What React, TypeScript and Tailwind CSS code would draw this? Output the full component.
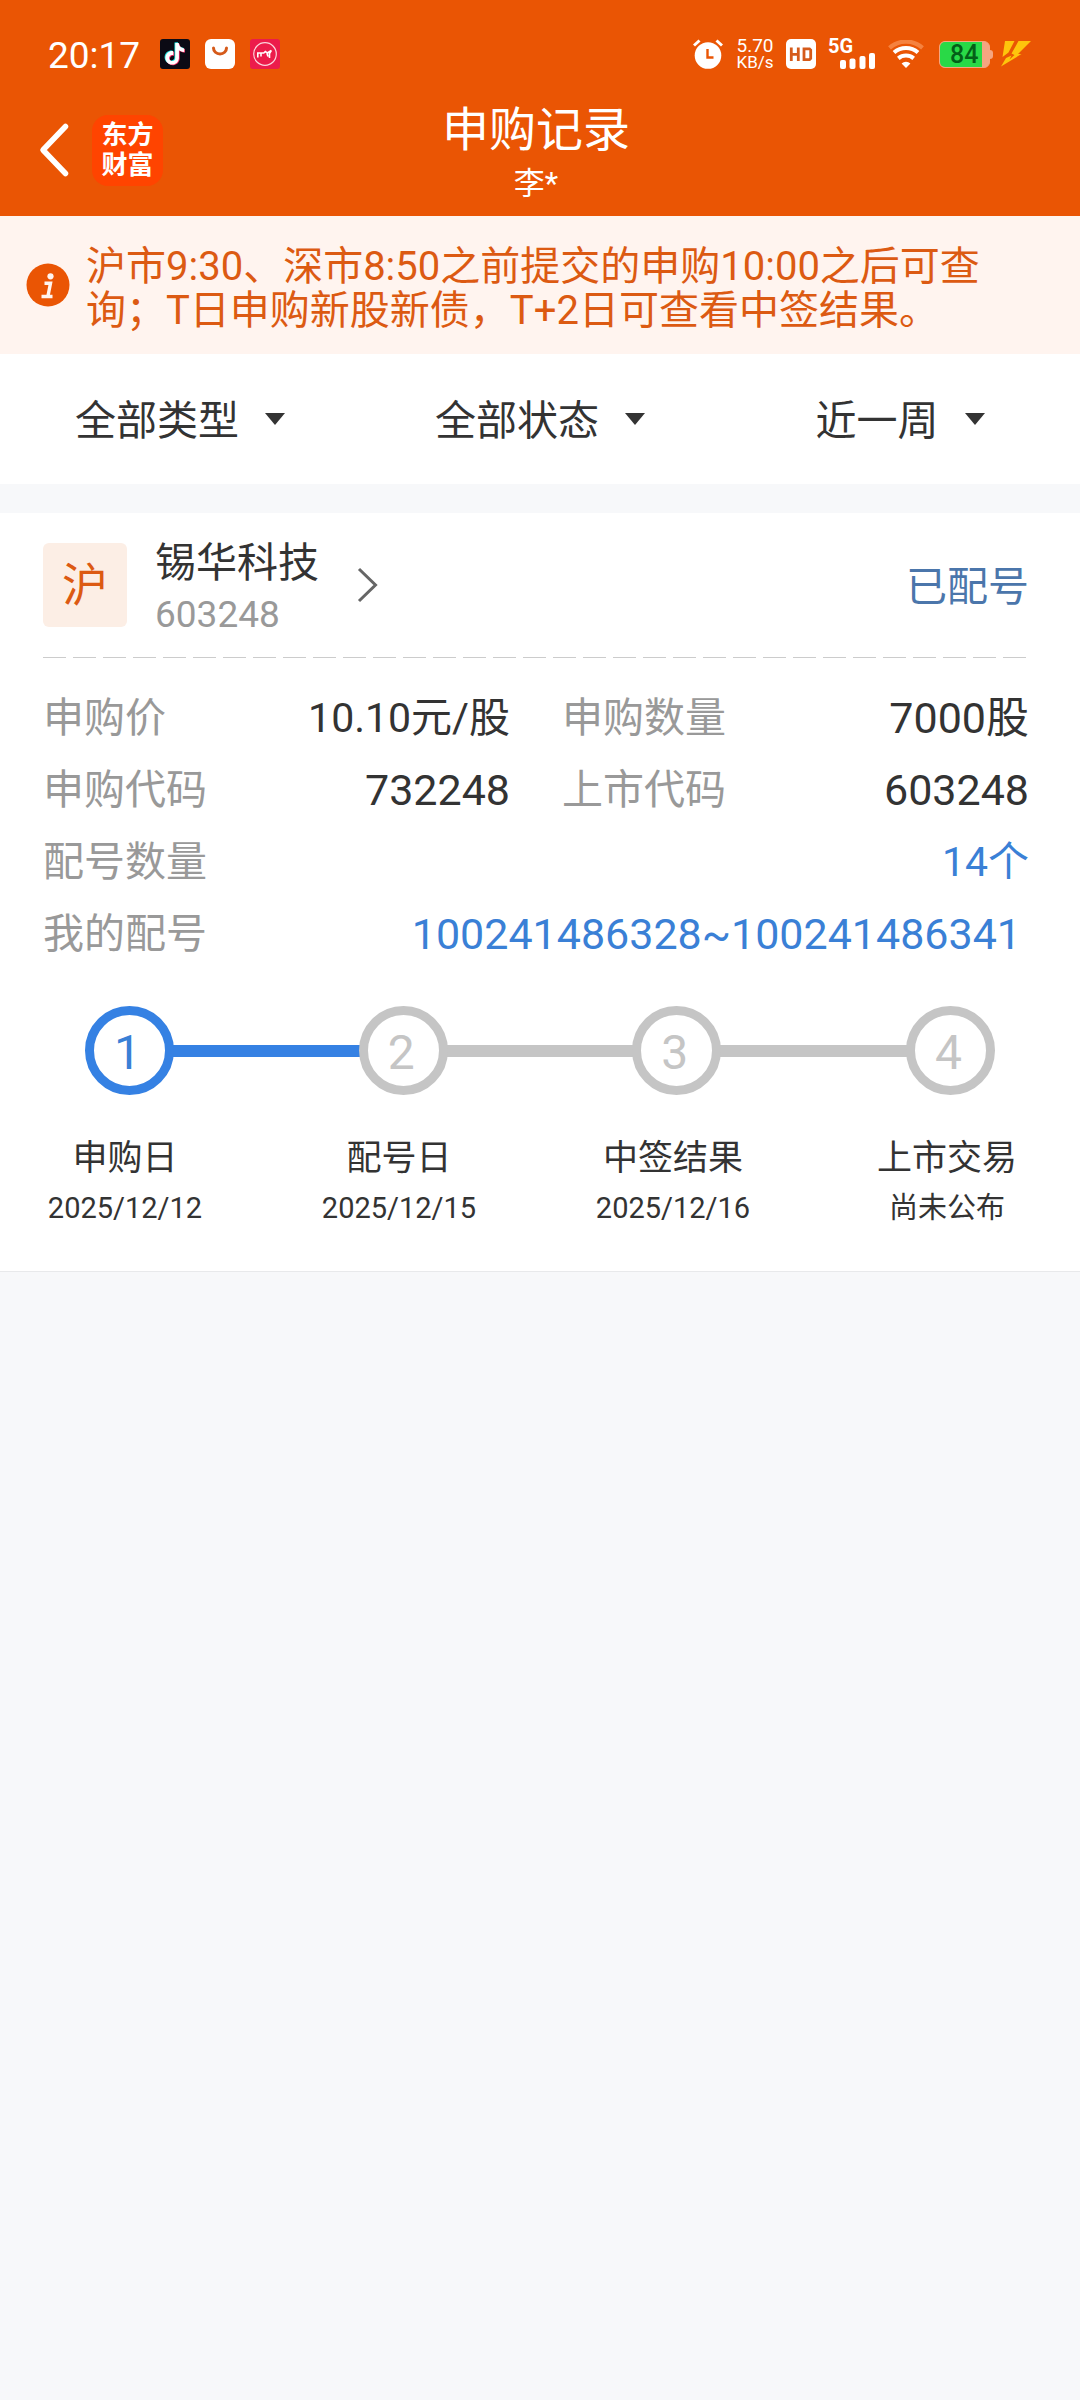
import React from "react";

const NOTE =
  "M12.525.02c1.31-.02 2.61-.01 3.91-.02.08 1.53.63 3.09 1.75 4.17 1.12 1.11 2.7 1.62 4.24 1.79v4.03c-1.44-.05-2.89-.35-4.2-.97-.57-.26-1.1-.59-1.62-.93-.01 2.92.01 5.84-.02 8.75-.08 1.4-.54 2.79-1.35 3.94-1.31 1.92-3.58 3.17-5.91 3.21-1.43.08-2.86-.31-4.08-1.03-2.02-1.19-3.44-3.37-3.65-5.71-.02-.5-.03-1-.01-1.49.18-1.9 1.12-3.72 2.58-4.96 1.66-1.44 3.98-2.13 6.15-1.72.02 1.48-.04 2.96-.04 4.44-.99-.32-2.15-.23-3.02.37-.63.41-1.11 1.04-1.36 1.75-.21.51-.15 1.07-.14 1.61.24 1.64 1.82 3.02 3.5 2.87 1.12-.01 2.19-.66 2.77-1.61.19-.33.4-.67.41-1.06.1-1.79.06-3.57.07-5.36.01-4.03-.01-8.05.02-12.07z";

function StatusBar() {
  return (
    <div className="flex h-[100px] items-center justify-between pt-2 pr-[49px] pl-12">
      <div className="flex items-center">
        <time className="w-28 pt-1 text-[37px] leading-[44px]">20:17</time>
        <div className="flex items-center gap-[15px]">
          <svg width="30" height="30" viewBox="0 0 30 30" aria-hidden="true">
            <rect width="30" height="30" rx="3" fill="#0b0a14" />
            <g transform="translate(4 4) scale(.9)">
              <path d={NOTE} fill="#25e5e0" transform="translate(-.9 -.7)" />
              <path d={NOTE} fill="#f5306a" transform="translate(.9 .7)" />
              <path d={NOTE} fill="#fff" />
            </g>
          </svg>
          <svg width="30" height="30" viewBox="0 0 30 30" aria-hidden="true">
            <rect width="30" height="30" rx="6" fill="#fff" />
            <path d="M8.500 9a6.500 6 0 0 0 13 0" fill="none" stroke="#d55a1a" strokeWidth="3" strokeLinecap="round" />
          </svg>
          <svg width="30" height="30" viewBox="0 0 30 30" aria-hidden="true">
            <rect width="30" height="30" rx="3" fill="#ec1c4b" />
            <circle cx="15" cy="15" r="11.300" fill="none" stroke="#fbd5dd" strokeWidth="1.200" />
            <path d="M7.800 18.500v-4.500h6l1.500-1.500 2 1.500 4-2.500-1.800 3v4.500M11 14v3.500M17 14.500l1 3" fill="none" stroke="#fff" strokeWidth="1.600" />
          </svg>
        </div>
      </div>
      <div className="flex items-center">
        <svg width="30" height="30" viewBox="0 0 30 30" aria-hidden="true">
          <circle cx="15" cy="16.500" r="13.300" fill="#fff" />
          <path d="M1 6.500 6.500 1.500M29 6.500 23.500 1.500" stroke="#fff" strokeWidth="3" />
          <path d="M14.500 10v8.500h6" fill="none" stroke="#ea5504" strokeWidth="2.400" />
        </svg>
        <div className="ml-3 w-10 text-center">
          <div className="text-[19px] leading-[17px]">5.70</div>
          <div className="text-[17px] leading-[17px]">KB/s</div>
        </div>
        <svg className="ml-[11px]" width="30" height="30" viewBox="0 0 30 30" aria-label="HD">
          <rect width="30" height="30" rx="5" fill="#fff" />
          <path d="M5.300 8.500v13.500M12.300 8.500v13.500M5.300 15.300h7M18 9.800h5.500l1.200 1.200v8.500l-1.200 1.200h-5.500z" fill="none" stroke="#d55a1a" strokeWidth="2.800" />
        </svg>
        <div className="relative ml-3 h-[30px] w-12">
          <span className="absolute top-0 left-0 text-[20px] leading-[15px] font-bold">5G</span>
          <svg className="absolute right-0 bottom-0" width="36" height="17" viewBox="0 0 36 17" aria-hidden="true" fill="#fff">
            <rect x="0" y="8" width="6" height="9" rx="2" />
            <rect x="9.500" y="6.500" width="6" height="10.500" rx="2" />
            <rect x="19.500" y="4" width="6" height="13" rx="2" />
            <rect x="29" y="1" width="6" height="16" rx="2" />
          </svg>
        </div>
        <svg className="ml-3" width="36" height="28" viewBox="0 0 36 28" aria-hidden="true" fill="none">
          <path d="M1.500 7.800a25 25 0 0 1 33 0" stroke="#f5823f" strokeWidth="4.200" />
          <path d="M6 12.600a18 18 0 0 1 24 0" stroke="#fff" strokeWidth="4" />
          <path d="M10.300 18.400a12 12 0 0 1 15.400 0" stroke="#fff" strokeWidth="4" />
          <path d="M18 28l-4.400-4.600a6.500 6.500 0 0 1 8.800 0z" fill="#fff" />
        </svg>
        <div className="ml-[15px] flex items-center">
          <div className="flex h-[27px] w-[51px] items-center rounded-md border border-[#f5a580] bg-[#f5a580]">
            <span className="flex h-full w-[42px] items-center rounded-l-[5px] bg-[#29d947] pl-[10px] text-[25px] leading-[25px] font-medium text-[#045f18]">
              84
            </span>
          </div>
          <span className="h-[9px] w-[3px] rounded-r bg-[#f5a580]" />
        </div>
        <svg className="ml-2" width="30" height="26" viewBox="0 0 30 26" aria-hidden="true" fill="#fec50c">
          <path d="M4 0h9.500L7.500 11.500 1.500 16zM17.500 0H30L17 13h3.500L0 25.500l5-8.500 5.500-2.500-2 4 5-4.500-3-1.500z" />
        </svg>
      </div>
    </div>
  );
}

function Header() {
  return (
    <header className="bg-[#ea5504] text-white">
      <StatusBar />
      <nav className="grid grid-cols-[1fr_auto_1fr] items-start pr-[38px] pl-[30px]">
        <div className="flex h-[100px] items-center gap-[14px]">
          <button type="button" aria-label="返回" className="flex h-16 w-12 items-center justify-center">
            <svg width="32" height="56" viewBox="0 0 32 56" aria-hidden="true">
              <path d="M27.500 4.500 5 28l22.500 23.500" fill="none" stroke="#fff" strokeWidth="5.500" strokeLinecap="round" strokeLinejoin="round" />
            </svg>
          </button>
          <div className="flex size-[71px] flex-col items-center justify-center rounded-2xl bg-[#ff4400] text-[26px] leading-[30px] font-bold">
            <span>东方</span>
            <span>财富</span>
          </div>
        </div>
        <div className="pb-2 text-center">
          <h1 className="text-[47px] leading-[60px]">申购记录</h1>
          <p className="text-[31px] leading-[48px]">李*</p>
        </div>
      </nav>
    </header>
  );
}

function Notice() {
  return (
    <section className="flex items-center gap-4 bg-[#fff4ef] py-[21px] pr-[72px] pl-[26px] text-[#dc5a12]">
      <svg className="shrink-0" width="44" height="44" viewBox="0 0 44 44" aria-hidden="true">
        <circle cx="22" cy="22" r="21.500" fill="#ea5504" />
        <circle cx="24.500" cy="13.300" r="3.100" fill="#fff4ef" />
        <path d="M18.500 20.300h6l-2.600 13M15.500 33.500h11" fill="none" stroke="#fff4ef" strokeWidth="3.400" />
      </svg>
      <p className="pt-2 text-[40px] leading-[44px]">
        沪市9:30、深市8:50之前提交的申购10:00之后可查询；T日申购新股新债，T+2日可查看中签结果。
      </p>
    </section>
  );
}

const filters = [
  { label: "类型", value: "全部类型" },
  { label: "状态", value: "全部状态" },
  { label: "时间", value: "近一周" },
];

function Filters() {
  return (
    <section className="grid h-[130px] grid-cols-3 bg-white text-[41px] leading-[60px]">
      {filters.map((f) => (
        <label key={f.label} className="flex items-center justify-center gap-[26px]">
          <select aria-label={f.label} className="field-sizing-content cursor-pointer appearance-none bg-transparent pt-1 outline-none">
            <option>{f.value}</option>
          </select>
          <svg width="20" height="12" viewBox="0 0 20 12" aria-hidden="true">
            <path d="M0 0h20L10 12z" fill="#333" />
          </svg>
        </label>
      ))}
    </section>
  );
}

const details = [
  { label: "申购价", value: "10.10元/股", row: "", style: "text-[41px]" },
  { label: "申购数量", value: "7000股", row: "", style: "text-[43px]" },
  { label: "申购代码", value: "732248", row: "", style: "text-[43px]" },
  { label: "上市代码", value: "603248", row: "", style: "text-[43px]" },
  { label: "配号数量", value: "14个", row: "col-span-2", style: "text-[41px] text-[#3a80d6]" },
  { label: "我的配号", value: "100241486328~100241486341", row: "col-span-2 pr-2", style: "text-[43px] text-[#3a80d6]" },
];

const steps = [
  { title: "申购日", date: "2025/12/12", done: true },
  { title: "配号日", date: "2025/12/15", done: false },
  { title: "中签结果", date: "2025/12/16", done: false },
  { title: "上市交易", date: "尚未公布", done: false },
];

function Steps() {
  return (
    <section>
      <div className="mt-9 flex items-center px-[85px]">
        {steps.map((s, i) => (
          <React.Fragment key={s.title}>
            {i > 0 && (
              <span className={steps[i - 1].done ? "-mx-1 h-3 flex-1 bg-[#3581e3]" : "-mx-1 h-3 flex-1 bg-[#c5c5c5]"} />
            )}
            <span
              className={
                s.done
                  ? "relative flex size-[89px] items-center justify-center rounded-full border-[9px] border-[#3581e3] bg-white pt-1 pr-1 text-[48px] leading-[60px] text-[#3a80d6]"
                  : "relative flex size-[89px] items-center justify-center rounded-full border-[9px] border-[#c5c5c5] bg-white pt-1 pr-1 text-[48px] leading-[60px] text-[#c5c5c5]"
              }
            >
              {i + 1}
            </span>
          </React.Fragment>
        ))}
      </div>
      <ol className="mt-[38px] flex justify-between pr-[54px] pb-10 pl-[46px] text-center">
        {steps.map((s) => (
          <li key={s.title} className="w-[158px]">
            <p className="text-[35px] leading-[52px]">{s.title}</p>
            <p className="text-[29px] leading-[46px]">{s.date}</p>
          </li>
        ))}
      </ol>
    </section>
  );
}

function Card() {
  return (
    <article className="mt-[29px] border-b border-[#e8e9eb] bg-white">
      <div className="pr-[51px] pl-[43px]">
        <div className="flex h-36 items-center justify-between">
          <a href="#stock" className="flex items-center">
            <span className="flex size-[84px] items-center justify-center rounded-md bg-[#fceee5] text-[46px] leading-[60px] text-[#dc5a12]">
              沪
            </span>
            <span className="ml-7 flex flex-col pt-1">
              <span className="text-[41px] leading-[56px]">锡华科技</span>
              <span className="text-[37px] leading-[48px] text-[#999]">603248</span>
            </span>
            <svg className="ml-[38px]" width="22" height="36" viewBox="0 0 22 36" aria-hidden="true">
              <path d="M2 2l16.500 16L2 34" fill="none" stroke="#666" strokeWidth="3" />
            </svg>
          </a>
          <span className="pt-1 text-[41px] leading-[60px] text-[#4b76ab]">已配号</span>
        </div>
        <div className="h-px bg-[repeating-linear-gradient(90deg,#ccc_0_23px,transparent_23px_30px)]" />
        <dl className="grid grid-cols-2 gap-x-[52px] pt-6 leading-[72px]">
          {details.map((d) => (
            <div key={d.label} className={`flex justify-between ${d.row}`}>
              <dt className="text-[41px] text-[#999]">{d.label}</dt>
              <dd className={d.style}>{d.value}</dd>
            </div>
          ))}
        </dl>
      </div>
      <Steps />
    </article>
  );
}

export default function App() {
  return (
    <div className="min-h-screen bg-[#f7f8fa] font-[Roboto,'Noto_Sans_CJK_SC',sans-serif] text-[#333]" lang="zh-CN">
      <Header />
      <main>
        <Notice />
        <Filters />
        <Card />
      </main>
    </div>
  );
}
